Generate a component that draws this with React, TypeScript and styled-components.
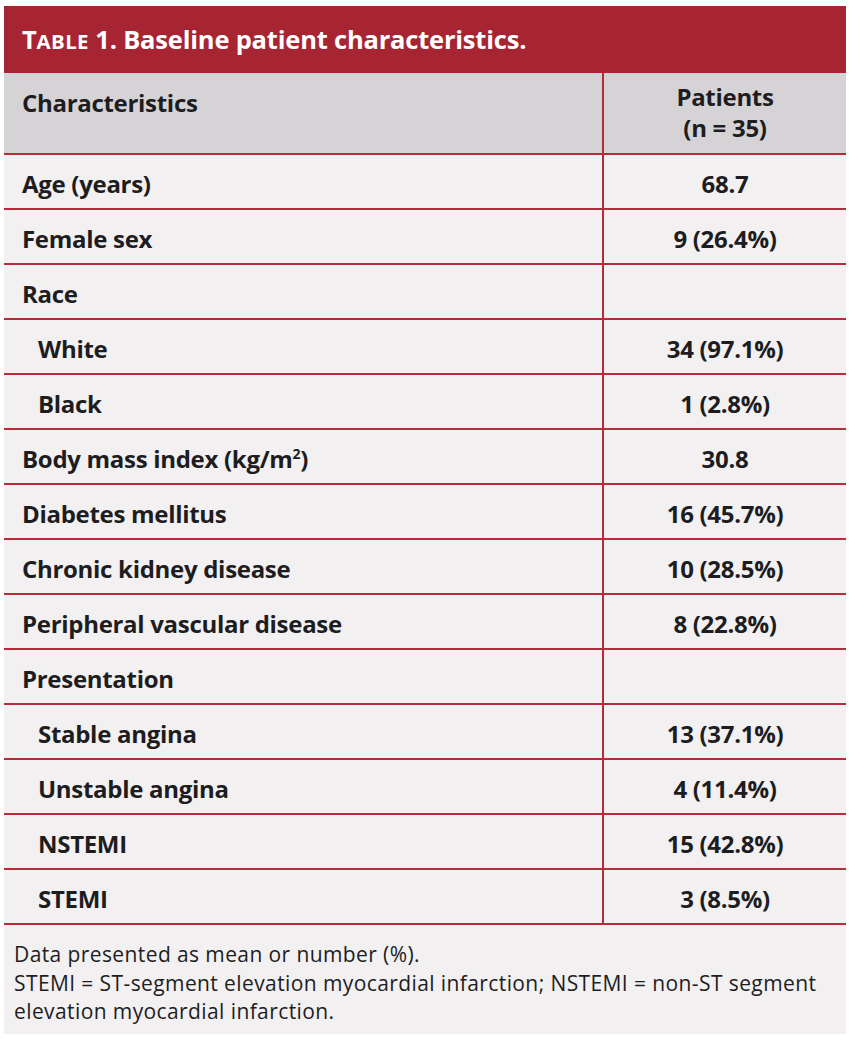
import React from "react";
import styled, { createGlobalStyle } from "styled-components";

const Global = createGlobalStyle`
  html, body { margin: 0; padding: 0; background: #ffffff; }
  body { font-family: "Open Sans", "Noto Sans", sans-serif; }
`;

const Page = styled.div`
  padding: 6px 8px 5px 4px;
`;

const Card = styled.div`
  background: #f2f0f1;
  width: 842px;
`;

const Title = styled.div`
  background: #a72532;
  color: #ffffff;
  height: 67px;
  display: flex;
  align-items: center;
  padding: 0 18px 2px;
  box-sizing: border-box;
  font-family: "Open Sans", sans-serif;
  font-weight: 700;
  font-size: 25.5px;
  letter-spacing: -0.2px;
`;

const SmallCaps = styled.span`
  text-transform: uppercase;
  font-size: 0.8em;
  letter-spacing: 0.4px;
`;

const Table = styled.div`
  display: grid;
  grid-template-columns: 600px 1fr;
`;

const HeadCell = styled.div<{ $center?: boolean }>`
  background: #d5d3d6;
  height: 82px;
  border-bottom: 2px solid #b62c3b;
  border-right: ${(p) => (p.$center ? "none" : "2px solid #b62c3b")};
  display: flex;
  flex-direction: column;
  justify-content: ${(p) => (p.$center ? "center" : "flex-start")};
  align-items: ${(p) => (p.$center ? "center" : "flex-start")};
  padding: ${(p) => (p.$center ? "0 0 2px" : "14px 18px 0")};
  box-sizing: border-box;
  font-weight: 700;
  font-size: 24px;
  line-height: 31px;
  color: #1d1d1f;
  letter-spacing: -0.3px;
`;

const Cell = styled.div<{ $value?: boolean; $indent?: boolean }>`
  height: 55px;
  box-sizing: border-box;
  border-bottom: 2px solid #b62c3b;
  border-right: ${(p) => (p.$value ? "none" : "2px solid #b62c3b")};
  display: flex;
  align-items: center;
  justify-content: ${(p) => (p.$value ? "center" : "flex-start")};
  padding-left: ${(p) => (p.$value ? "0" : p.$indent ? "34px" : "18px")};
  padding-top: 3px;
  font-weight: 700;
  font-size: 24px;
  color: #1d1d1f;
  letter-spacing: -0.3px;
`;

const Sup = styled.sup`
  font-size: 14px;
  line-height: 0;
  vertical-align: 9px;
`;

const Foot = styled.div`
  padding: 15px 10px 8px 10px;
  font-family: "Open Sans", sans-serif;
  font-size: 21px;
  line-height: 28.7px;
  color: #1d1d1f;
  letter-spacing: 0.4px;
`;

type Row = { label: React.ReactNode; value: string; indent?: boolean };

const rows: Row[] = [
  { label: "Age (years)", value: "68.7" },
  { label: "Female sex", value: "9 (26.4%)" },
  { label: "Race", value: "" },
  { label: "White", value: "34 (97.1%)", indent: true },
  { label: "Black", value: "1 (2.8%)", indent: true },
  {
    label: (
      <span>
        Body mass index (kg/m<Sup>2</Sup>)
      </span>
    ),
    value: "30.8",
  },
  { label: "Diabetes mellitus", value: "16 (45.7%)" },
  { label: "Chronic kidney disease", value: "10 (28.5%)" },
  { label: "Peripheral vascular disease", value: "8 (22.8%)" },
  { label: "Presentation", value: "" },
  { label: "Stable angina", value: "13 (37.1%)", indent: true },
  { label: "Unstable angina", value: "4 (11.4%)", indent: true },
  { label: "NSTEMI", value: "15 (42.8%)", indent: true },
  { label: "STEMI", value: "3 (8.5%)", indent: true },
];

export default function App() {
  return (
    <>
      <Global />
      <Page>
        <Card>
          <Title>
            <span>
              T<SmallCaps>able</SmallCaps> 1. Baseline patient characteristics.
            </span>
          </Title>
          <Table>
            <HeadCell>Characteristics</HeadCell>
            <HeadCell $center>
              <span>Patients</span>
              <span>(n = 35)</span>
            </HeadCell>
            {rows.map((r, i) => (
              <React.Fragment key={i}>
                <Cell $indent={r.indent}>{r.label}</Cell>
                <Cell $value>{r.value}</Cell>
              </React.Fragment>
            ))}
          </Table>
          <Foot>
            Data presented as mean or number (%).
            <br />
            STEMI = ST-segment elevation myocardial infarction; NSTEMI = non-ST segment
            <br />
            elevation myocardial infarction.
          </Foot>
        </Card>
      </Page>
    </>
  );
}
